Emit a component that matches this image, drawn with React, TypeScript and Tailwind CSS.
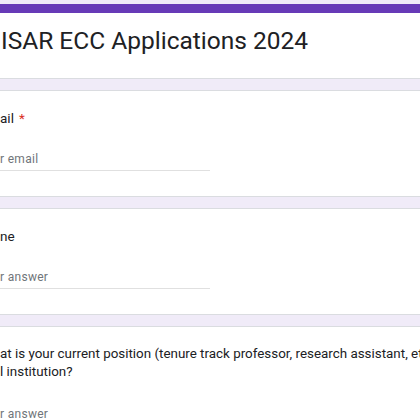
const fields = [
  { label: "ail", required: true, placeholder: "r email" },
  { label: "ne", required: false, placeholder: "r answer" },
];

function Field({ label, required, placeholder }: { label: string; required: boolean; placeholder: string }) {
  return (
    <div className="border-y border-[#dadce0] bg-white pt-[18px] pb-[25px]">
      <div className="text-[13.5px] leading-[19px] text-[#202124]">
        {label}
        {required && <span className="ml-[5px] text-[#d93025]">*</span>}
      </div>
      <div className="mt-[23px] w-[210px] border-b border-[#e0e0e0] pb-[3px] text-[12px] leading-[16px] tracking-[0.3px] text-[#70757a]">
        {placeholder}
      </div>
    </div>
  );
}

export default function App() {
  return (
    <div className="h-[420px] w-[420px] overflow-hidden bg-[#f0ebf8] pt-[4px] font-['Roboto',sans-serif]">
      <div className="flex flex-col gap-[11px]">
        {/* title card */}
        <div className="border-b border-[#dadce0] bg-white">
          <div className="h-[9px] bg-[#673ab7]" />
          <h1 className="whitespace-nowrap pl-[1px] pt-[13px] pb-[22px] text-[24.5px] leading-[30px] text-[#202124]">
            ISAR ECC Applications 2024
          </h1>
        </div>

        {fields.map((f) => (
          <Field key={f.label} {...f} />
        ))}

        <div className="border-t border-[#dadce0] bg-white pt-[18px]">
          <div className="text-[13.4px] leading-[18px] text-[#202124]">
            <div className="whitespace-nowrap">at is your current position (tenure track professor, research assistant, et</div>
            <div>l institution?</div>
          </div>
          <div className="mt-[25px] w-[210px] border-b border-[#e0e0e0] pb-[3px] text-[12px] leading-[16px] tracking-[0.3px] text-[#70757a]">
            r answer
          </div>
        </div>
      </div>
    </div>
  );
}
